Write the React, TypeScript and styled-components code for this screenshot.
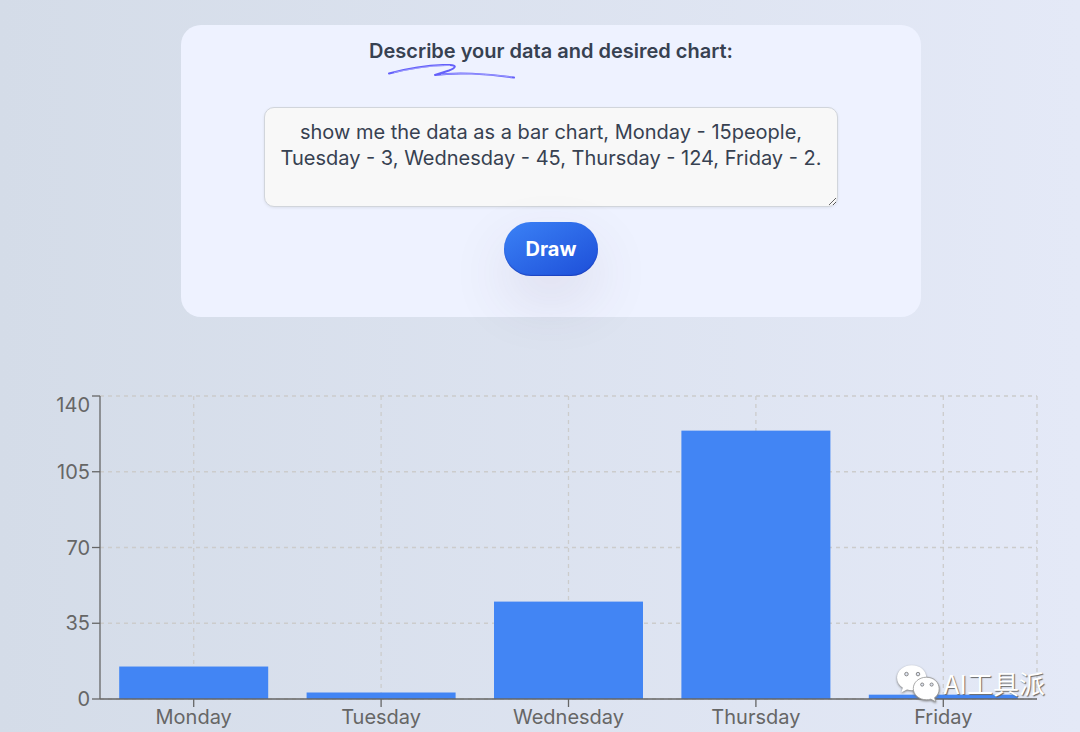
import React, { useState } from "react";
import styled, { createGlobalStyle } from "styled-components";

const GlobalStyle = createGlobalStyle`
  *, *::before, *::after { box-sizing: border-box; }
  body {
    margin: 0;
    min-height: 100vh;
    background: linear-gradient(to right, #d4dce8, #e4e9f7);
    font-family: Inter, "Liberation Sans", sans-serif;
    color: #374151;
  }
`;

const Page = styled.main`
  position: relative;
  display: flex;
  flex-direction: column;
  gap: 44px;
  padding: 25px 0 0 22px;
`;

const PromptCard = styled.form`
  display: flex;
  flex-direction: column;
  align-items: center;
  width: 70%;
  align-self: center;
  padding: 10px 24px 41px;
  border-radius: 20px;
  background: #eef2ff;
`;

const Title = styled.label`
  position: relative;
  font-size: 20px;
  line-height: 32px;
  font-weight: 600;
`;

const Scribble = styled.svg`
  position: absolute;
  top: 29px;
  left: 19px;
  width: 128px;
  height: 16px;
`;

const Prompt = styled.textarea`
  width: 83%;
  height: 100px;
  margin: 40px 0 15px;
  padding: 11px 12px;
  border: 1px solid #d1d5db;
  border-radius: 10px;
  background: #f8f8f8;
  box-shadow: 0 1px 3px rgba(0, 0, 0, 0.08);
  color: inherit;
  font-family: inherit;
  font-size: 20px;
  line-height: 26px;
  text-align: center;
  resize: vertical;
  outline: none;
`;

const DrawButton = styled.button`
  padding: 14px 22px;
  border: 0;
  border-radius: 27px;
  background: linear-gradient(to bottom right, #3b82f6, #1d4ed8);
  box-shadow: 0 24px 60px rgba(80, 60, 90, 0.12), inset 0 -1px 1px rgba(20, 40, 160, 0.5);
  color: #fff;
  font-family: inherit;
  font-size: 20px;
  line-height: 26px;
  font-weight: 700;
  cursor: pointer;
`;

const Chart = styled.svg`
  display: block;
  width: 100%;
  height: auto;
  font-size: 20px;
  fill: #666;
`;

const Watermark = styled.div`
  position: absolute;
  right: 35px;
  bottom: 29px;
  display: flex;
  align-items: center;
  gap: 4px;
  color: #fff;
  font-family: "Noto Sans CJK SC", sans-serif;
  font-size: 26px;
  line-height: 40px;
  text-shadow: 1px 1px 1px #666;
`;

const WechatIcon = styled.svg`
  width: 44px;
  height: 40px;
  filter: drop-shadow(0 1px 1px #777);
`;

const data = [
  { day: "Monday", value: 15 },
  { day: "Tuesday", value: 3 },
  { day: "Wednesday", value: 45 },
  { day: "Thursday", value: 124 },
  { day: "Friday", value: 2 },
];
const ticks = [0, 35, 70, 105, 140];

const plot = { left: 78, right: 1015, top: 35, bottom: 338 };
const step = (plot.right - plot.left) / data.length;
const barWidth = 149;
const yOf = (value: number) => plot.bottom - (value / 140) * (plot.bottom - plot.top);
const xOf = (index: number) => plot.left + step * (index + 0.5);

function BarChart() {
  return (
    <Chart viewBox="0 0 1058 371" role="img" aria-label="Bar chart of people per day">
      <g stroke="#ccc" strokeWidth="1.3" strokeDasharray="4 4">
        {ticks.map((t) => (
          <line key={t} x1={plot.left} x2={plot.right} y1={yOf(t)} y2={yOf(t)} />
        ))}
        {data.map((d, i) => (
          <line key={d.day} x1={xOf(i)} x2={xOf(i)} y1={plot.top} y2={plot.bottom} />
        ))}
        <line x1={plot.right} x2={plot.right} y1={plot.top} y2={plot.bottom} />
      </g>
      {data.map((d, i) => (
        <rect
          key={d.day}
          x={xOf(i) - barWidth / 2}
          y={yOf(d.value)}
          width={barWidth}
          height={plot.bottom - yOf(d.value)}
          fill="#4285f4"
        />
      ))}
      <g stroke="#666" strokeWidth="1.3">
        <line x1={plot.left} x2={plot.left} y1={plot.top} y2={plot.bottom} />
        <line x1={plot.left} x2={plot.right} y1={plot.bottom} y2={plot.bottom} />
        {ticks.map((t) => (
          <line key={t} x1={plot.left - 8} x2={plot.left} y1={yOf(t)} y2={yOf(t)} />
        ))}
        {data.map((d, i) => (
          <line key={d.day} x1={xOf(i)} x2={xOf(i)} y1={plot.bottom} y2={plot.bottom + 8} />
        ))}
      </g>
      {ticks.map((t) => (
        <text key={t} x={68} y={t === 140 ? 51 : yOf(t) + 7} textAnchor="end">
          {t}
        </text>
      ))}
      {data.map((d, i) => (
        <text key={d.day} x={xOf(i)} y={363} textAnchor="middle">
          {d.day}
        </text>
      ))}
    </Chart>
  );
}

export default function App() {
  const [prompt, setPrompt] = useState(
    "show me the data as a bar chart, Monday - 15people, Tuesday - 3, Wednesday - 45, Thursday - 124, Friday - 2."
  );
  return (
    <>
      <GlobalStyle />
      <Page>
        <PromptCard onSubmit={(e) => e.preventDefault()}>
          <Title htmlFor="prompt">
            Describe your data and desired chart:
            <Scribble viewBox="0 0 128 16" fill="none" aria-hidden="true">
              <path
                d="M1 9.500C18 5 42 .5 62 1c7 .2 6 3-1 5.500L47 11c20-3 52-1.500 79 2.500"
                stroke="#6460fa"
                strokeWidth="2"
                strokeLinecap="round"
                strokeLinejoin="round"
              />
              <path d="M6 8.500C22 5 45 1 62 1.500" stroke="#b4b4ff" strokeWidth=".7" />
              <path d="M53 10.500c20-2 48-.5 71 2.700" stroke="#b4b4ff" strokeWidth=".7" />
            </Scribble>
          </Title>
          <Prompt id="prompt" value={prompt} onChange={(e) => setPrompt(e.target.value)} />
          <DrawButton type="submit">Draw</DrawButton>
        </PromptCard>
        <BarChart />
        <Watermark>
          <WechatIcon viewBox="0 0 42 38" aria-hidden="true">
            <path
              fill="#fff"
              d="M15 2C7 2 1 7.300 1 14c0 4 2 7.300 5.500 9.500L5 28l5.500-2.800c1.500.4 3 .7 4.500.7 8 0 14-5.200 14-12S23 2 15 2z"
            />
            <path
              fill="#fff"
              stroke="#999"
              strokeWidth=".8"
              d="M29 13.500c-7 0-12.500 4.800-12.500 10.700S22 35 29 35c1.500 0 3-.2 4.300-.6L38 37l-1.200-4c3-2 4.400-5 4.400-8.500 0-6.200-5.200-11-12.200-11z"
            />
            <g fill="#dfe4f0" stroke="#777" strokeWidth=".8">
              <circle cx="10" cy="10.500" r="1.700" />
              <circle cx="21" cy="10.500" r="1.700" />
              <circle cx="25" cy="20.500" r="1.500" />
              <circle cx="34" cy="20.500" r="1.500" />
            </g>
          </WechatIcon>
          AI工具派
        </Watermark>
      </Page>
    </>
  );
}
